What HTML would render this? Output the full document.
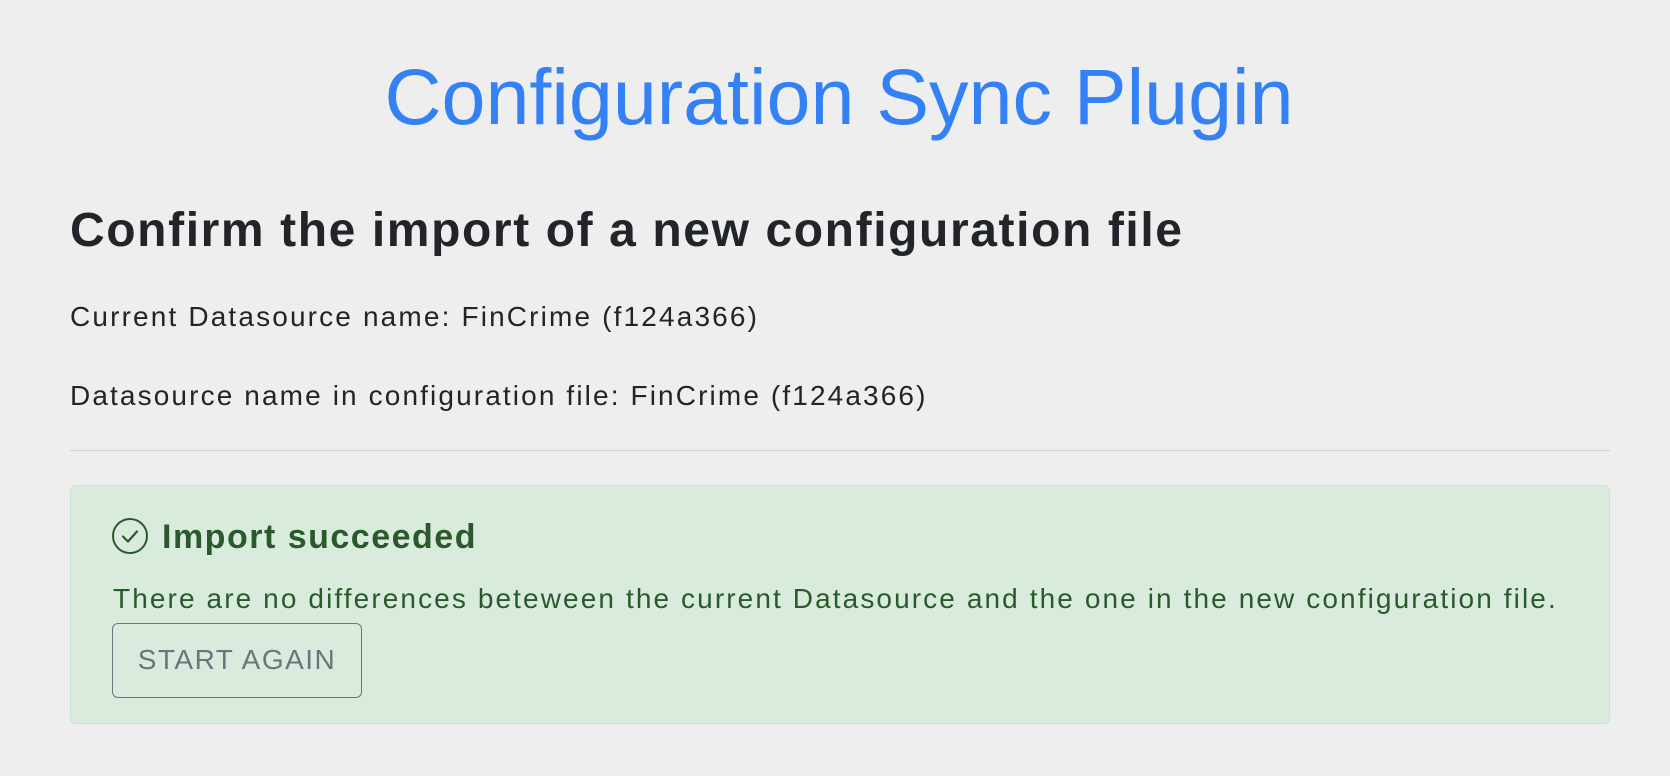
<!DOCTYPE html>
<html><head><meta charset="utf-8"><style>
html,body{margin:0;padding:0;}
body{width:1670px;height:776px;background:#eeeeee;position:relative;overflow:hidden;font-family:"Liberation Sans",sans-serif;}
.a{position:absolute;line-height:1;white-space:nowrap;}
</style></head><body>
<div class="a" style="left:4px;width:1670px;text-align:center;top:57px;font-size:79px;color:#3381f5;">Configuration Sync Plugin</div>
<div class="a" style="left:70px;top:207px;font-size:48px;font-weight:bold;letter-spacing:1.6px;color:#212529;">Confirm the import of a new configuration file</div>
<div class="a" style="left:70px;top:303px;font-size:28px;letter-spacing:2.15px;color:#212529;">Current Datasource name: FinCrime (f124a366)</div>
<div class="a" style="left:70px;top:382px;font-size:28px;letter-spacing:2.12px;color:#212529;">Datasource name in configuration file: FinCrime (f124a366)</div>
<div style="position:absolute;left:70px;top:450px;width:1540px;height:1px;background:#d3d3d3;"></div>
<div style="position:absolute;left:70px;top:485px;width:1538px;height:237px;background:#d9ebdc;border:1px solid #c6e3cb;border-radius:6px;"></div>
<svg style="position:absolute;left:111px;top:517px" width="38" height="38" viewBox="0 0 38 38"><circle cx="19" cy="19" r="17" fill="none" stroke="#2a5a2c" stroke-width="2"/><path d="M12 19.5l5 5 9-10" fill="none" stroke="#2a5a2c" stroke-width="2.2" stroke-linecap="round" stroke-linejoin="round"/></svg>
<div class="a" style="left:162px;top:520px;font-size:34px;font-weight:bold;letter-spacing:1.5px;color:#2a5a2c;">Import succeeded</div>
<div class="a" style="left:113px;top:585px;font-size:28px;letter-spacing:2.1px;color:#2a5a2c;">There are no differences beteween the current Datasource and the one in the new configuration file.</div>
<div style="position:absolute;left:112px;top:623px;width:250px;height:75px;border:1.5px solid #6c757d;border-radius:6px;box-sizing:border-box;color:#6c757d;font-size:28px;letter-spacing:1.5px;line-height:72px;text-align:center;">START AGAIN</div>
</body></html>
